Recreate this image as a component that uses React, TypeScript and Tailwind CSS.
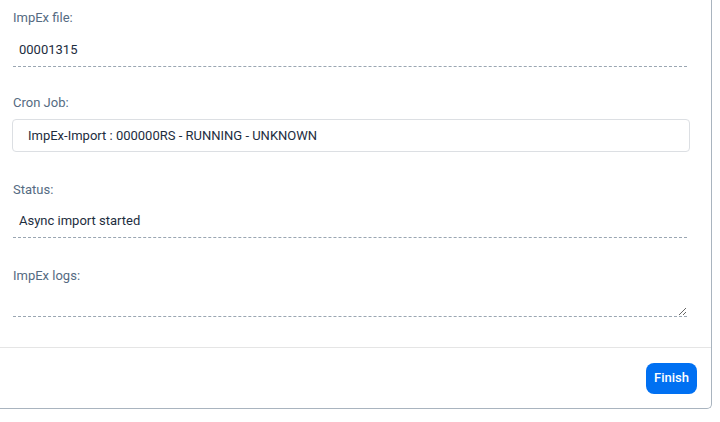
import React from "react";

const font = { fontFamily: 'Roboto, "Liberation Sans", Arial, sans-serif' };

function Label({ children, className = "" }: { children: React.ReactNode; className?: string }) {
  return (
    <div className={`ml-[13px] text-[13px] leading-4 text-[#556b82] ${className}`}>{children}</div>
  );
}

function ReadOnlyField({ value }: { value: string }) {
  return (
    <div className="ml-[13px] w-[674px] h-[33px] flex items-center px-[6px] border-b border-dashed border-[#9aa6b2] text-[13px] text-[#1d2d3e]">
      {value}
    </div>
  );
}

export default function App() {
  return (
    <div className="w-[720px] h-[422px] bg-white" style={font}>
      <div className="w-[712px] h-[409px] flex flex-col bg-white border-r border-b border-[#a9b4bf] rounded-br-[5px]">
        {/* Form */}
        <div className="flex flex-col pt-[10px]">
          <Label>ImpEx file:</Label>
          <div className="mt-[8px]">
            <ReadOnlyField value="00001315" />
          </div>

          <Label className="mt-[28px]">Cron Job:</Label>
          <div className="mt-[8px] ml-[12px] w-[678px] h-[33px] flex items-center pl-[15px] border border-[#dcdfe3] rounded-[4px] text-[13px] text-[#1d2d3e]">
            ImpEx-Import : 000000RS - RUNNING - UNKNOWN
          </div>

          <Label className="mt-[30px]">Status:</Label>
          <div className="mt-[7px]">
            <ReadOnlyField value="Async import started" />
          </div>

          <Label className="mt-[30px]">ImpEx logs:</Label>
          <textarea
            readOnly
            className="mt-[7px] ml-[13px] w-[674px] h-[26px] px-[6px] py-[4px] border-b border-dashed border-[#9aa6b2] text-[13px] text-[#1d2d3e] outline-none"
          />
        </div>

        {/* Footer */}
        <div className="mt-auto border-t border-[#e5e5e5] h-[61px] flex items-center justify-end pr-[14px]">
          <button className="w-[51px] h-[31px] rounded-[8px] bg-[#0070f2] text-white text-[13px] font-medium">
            Finish
          </button>
        </div>
      </div>
    </div>
  );
}
